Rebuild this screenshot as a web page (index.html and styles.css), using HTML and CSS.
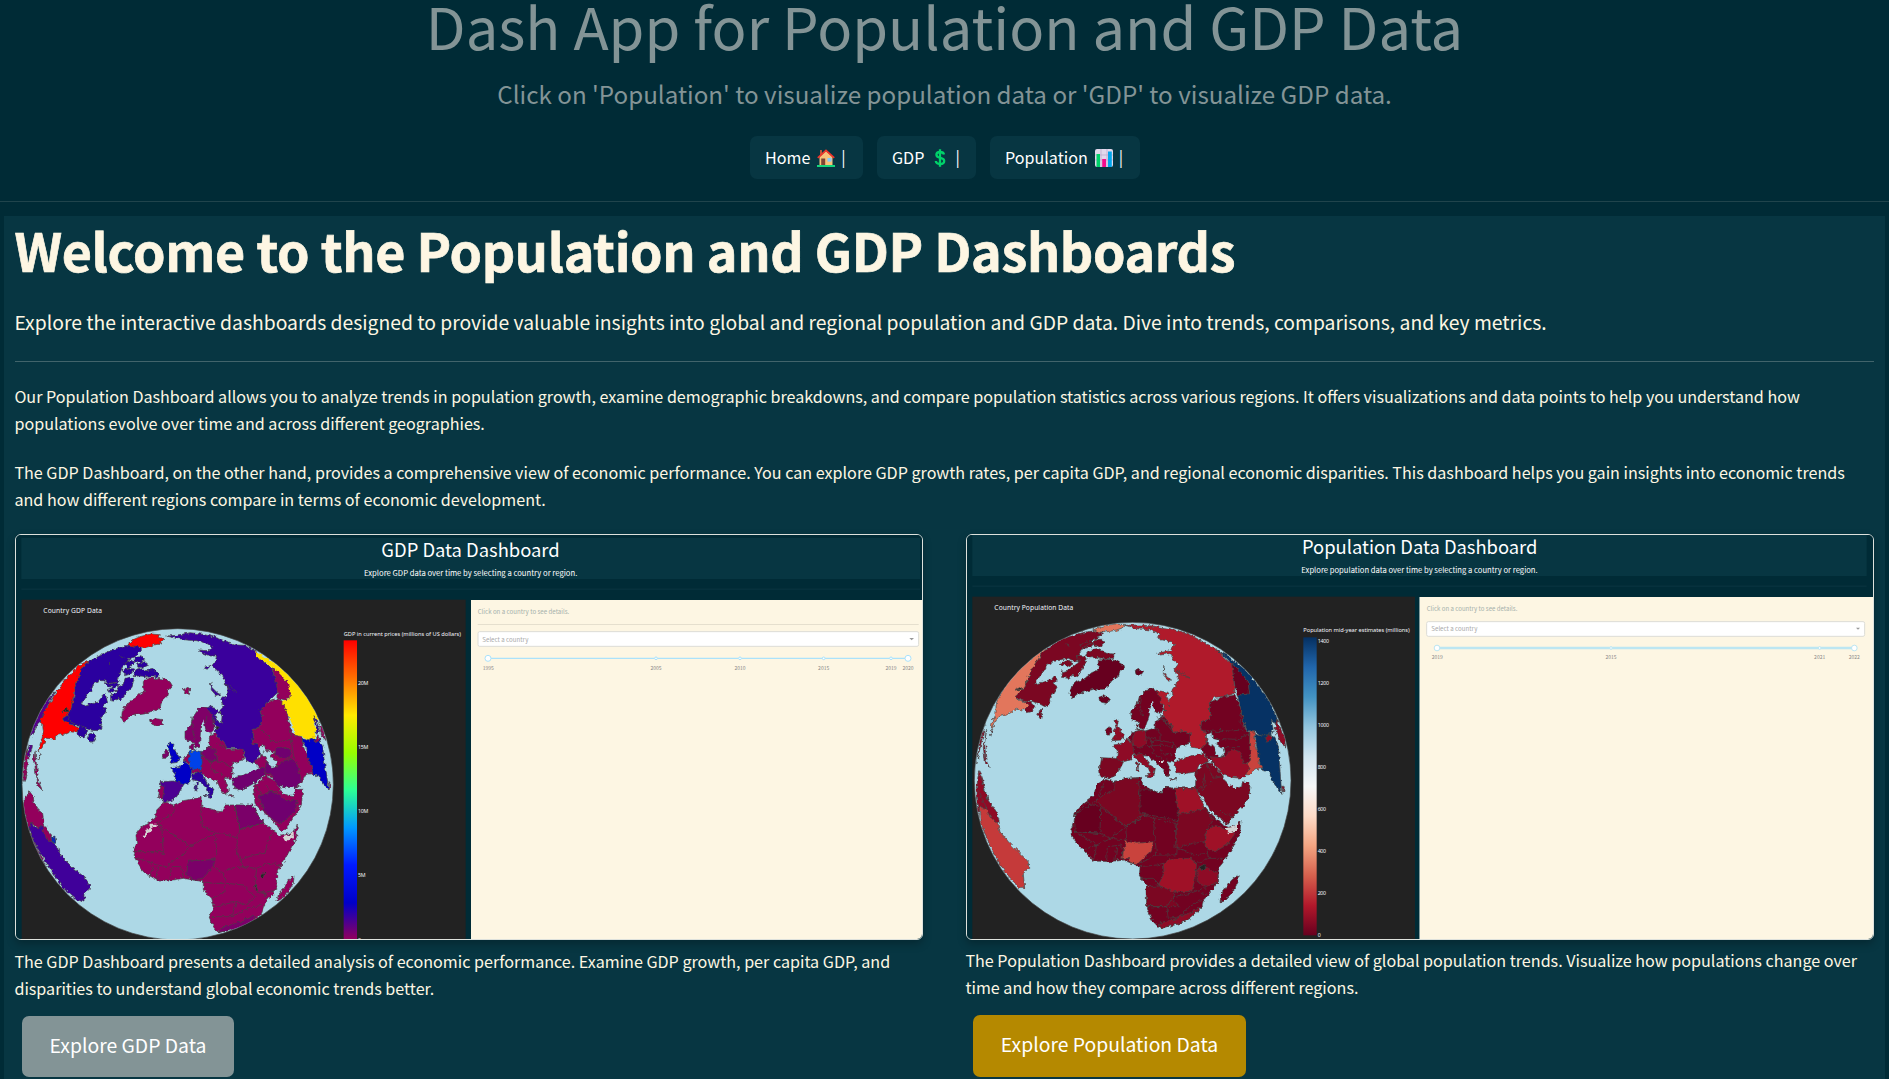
FILE: index.html
```html
<!DOCTYPE html>
<html lang="en">
<head>
<meta charset="utf-8">
<title>Dash App for Population and GDP Data</title>
<link rel="stylesheet" href="styles.css">
</head>
<body>
<header class="site-header">
  <h1 class="site-title"><span>Dash App for Population and GDP Data</span></h1>
  <p class="site-subtitle"><span>Click on 'Population' to visualize population data or 'GDP' to visualize GDP data.</span></p>
  <nav class="nav">
    <a class="nav-link nav-home"><span>Home</span>
      <svg class="emoji" viewBox="0 0 18 18"><path d="M3 1h2v5H3z" fill="#b5583c"/><path d="M2.5 8 9 2l6.500 6v8.500h-13z" fill="#f8c27a"/><path d="M.8 8.800 9 1.400l8.200 7.400" fill="none" stroke="#f0352c" stroke-width="1.800"/><path d="M4.200 9.500h4v7h-4z" fill="#7d4533"/><path d="M10.500 9h4v3.600h-4z" fill="#83cbff"/><path d="M0 16h18v2H0z" fill="#14d67c"/></svg>
      <span class="bar">|</span></a>
    <a class="nav-link nav-gdp"><span>GDP</span>
      <svg class="emoji" viewBox="0 0 18 18"><path d="M13 5.500C12.600 3.600 11 3 9 3 6.800 3 5.400 4 5.400 5.800c0 4.400 7.800 2 7.800 6.200 0 2-1.700 3-4.100 3-2.500 0-4.100-1-4.300-3M9 .3v17.400" fill="none" stroke="#00d26a" stroke-width="2.300"/></svg>
      <span class="bar">|</span></a>
    <a class="nav-link nav-pop"><span>Population</span>
      <svg class="emoji" viewBox="0 0 18 18"><rect width="18" height="18" rx="2" fill="#e1d8ec"/><path d="M0 6h18M0 11h18M6 0v18M12 0v18" stroke="#b9a8cc" stroke-width=".7"/><path d="M1.500 5H5v13H1.500z" fill="#00d26a"/><path d="M7.200 10h3.800v8H7.200z" fill="#f70a8d"/><path d="M13 2.500h3.800V18H13z" fill="#00a6ed"/></svg>
      <span class="bar">|</span></a>
  </nav>
</header>
<main class="panel">
  <h2 class="welcome"><span>Welcome to the Population and GDP Dashboards</span></h2>
  <p class="lead"><span>Explore the interactive dashboards designed to provide valuable insights into global and regional population and GDP data. Dive into trends, comparisons, and key metrics.</span></p>
  <hr class="rule">
  <p class="copy"><span>Our Population Dashboard allows you to analyze trends in population growth, examine demographic breakdowns, and compare population statistics across various regions. It offers visualizations and data points to help you understand how</span><br>populations evolve over time and across different geographies.</p>
  <p class="copy"><span>The GDP Dashboard, on the other hand, provides a comprehensive view of economic performance. You can explore GDP growth rates, per capita GDP, and regional economic disparities. This dashboard helps you gain insights into economic trends</span><br>and how different regions compare in terms of economic development.</p>
  <div class="cards">
    <section class="card card-gdp">
      <svg class="shot" viewBox="18 15 2718 1212" preserveAspectRatio="none">
        <defs>
          <linearGradient id="rainbow" x1="0" y1="1" x2="0" y2="0">
            <stop offset="0" stop-color="#96005a"/><stop offset=".125" stop-color="#0000c8"/><stop offset=".25" stop-color="#0019ff"/><stop offset=".375" stop-color="#0098ff"/><stop offset=".5" stop-color="#2cff96"/><stop offset=".625" stop-color="#97ff00"/><stop offset=".75" stop-color="#ffea00"/><stop offset=".875" stop-color="#ff6f00"/><stop offset="1" stop-color="#f00"/>
          </linearGradient>
          <filter id="coast" x="0" y="0" width="1" height="1" color-interpolation-filters="sRGB"><feTurbulence type="fractalNoise" baseFrequency=".09" numOctaves="2" seed="4"/><feDisplacementMap in="SourceGraphic" scale="14" xChannelSelector="R" yChannelSelector="G"/></filter>
          <clipPath id="globeA"><circle cx="503" cy="763" r="466"/></clipPath>
        </defs>
        <rect x="18" y="15" width="2718" height="1212" fill="#002b36"/>
        <rect x="34" y="24" width="2696" height="123" fill="#073642"/>
        <rect x="34" y="175" width="2696" height="5" fill="#06313d"/>
        <text x="1114" y="81" font-size="56" textLength="535" lengthAdjust="spacingAndGlyphs" fill="#fff">GDP Data Dashboard</text>
        <text x="1062" y="137" font-size="23" textLength="640" lengthAdjust="spacingAndGlyphs" fill="#fff">Explore GDP data over time by selecting a country or region.</text>
        <rect x="35" y="209" width="1332" height="1018" fill="#222"/>
        <text class="ui" x="100" y="248" font-size="20" textLength="176" fill="#f2f5fa">Country GDP Data</text>
        <circle cx="503" cy="763" r="467" fill="#add8e6" stroke="#444" stroke-width="2"/>
        <g clip-path="url(#globeA)"><g filter="url(#coast)" stroke="#444" stroke-width="2" stroke-linejoin="round" fill="#93005c">
          <path fill="#fe0000" d="M352 345 372 328 390 320 420 312 448 314 445 322 460 325 452 335 455 342 430 345 410 352 385 352Z"/>
          <path fill="#2b009f" d="M238 394 260 382 300 362 350 346 385 350 392 356 385 372 375 380 358 385 352 397 338 410 332 425 330 435 322 445 330 455 318 458 295 460 285 452 270 452 250 462 245 478 228 500 215 527 235 522 250 517 262 518 285 490 290 505 293 515 282 520 280 530 290 535 285 550 272 565 275 580 272 595 262 602 240 600 220 592 208 585 195 585 180 580 165 575 158 565 172 555 185 530 192 500 195 470 205 440 215 415Z"/>
          <path fill="#2b009f" d="M205 585 225 592 230 605 222 625 210 622 200 608ZM240 612 250 608 257 628 248 640 240 630 232 622ZM345 400 362 390 375 395 362 410 350 415ZM338 420 358 413 372 418 360 432 345 436ZM372 384 392 380 404 386 396 396 378 394ZM380 402 405 395 416 405 402 412 384 412ZM375 422 395 416 408 422 430 418 448 430 446 442 425 438 405 440 385 438 370 440ZM345 445 362 440 372 450 366 472 352 485 342 500 330 512 326 502 315 514 302 512 302 495 318 490 328 470 340 462ZM285 458 300 462 312 458 328 465 312 472 296 470ZM292 478 308 474 320 480 300 488Z"/>
          <path fill="#fe0000" d="M238 394 210 402 165 450 130 500 105 545 88 572 98 580 100 605 96 625 88 650 84 665 92 660 101 640 108 624 130 628 145 615 165 612 180 605 200 608 207 595 195 588 178 580 160 570 158 565 172 555 182 540 188 515 192 480 205 440 220 410Z"/>
          <path fill="#55008c" d="M135 485 105 515 80 560 60 612 62 620 78 595 90 572 105 545 118 515ZM58 640 67 650 60 676 48 690Z"/>
          <path d="M50 655 54 690 46 745 40 760 42 700ZM75 662 70 690 76 715 78 738 84 735 79 700ZM90 668 86 690 90 680ZM80 738 90 765 98 782 84 768ZM58 783 70 800 72 820 85 840 98 850 102 880 115 905 125 915 122 925 130 937 110 930 95 900 80 890 70 882 60 905 80 955 110 1010 80 970 50 880 38 820 48 800Z"/>
          <path fill="#40009a" d="M66 876 75 892 95 890 102 910 110 928 130 938 142 948 146 965 160 985 190 1015 222 1040 240 1065 237 1080 222 1090 222 1115 200 1110 160 1075 110 1000 80 950 58 900Z"/>
          <path fill="#0828b4" d="M123 922 134 918 138 936 128 940Z"/>
          <path d="M400 455 410 443 440 445 465 448 480 455 487 467 475 480 470 500 455 515 450 535 430 543 408 548 380 552 360 560 342 577 335 565 337 545 348 525 365 512 380 500 390 490 403 485 400 470ZM422 570 435 566 455 568 457 582 437 587 425 582ZM518 480 530 472 543 480 536 488 535 497 526 490Z"/>
          <path fill="#3a009c" d="M470 318 500 316 540 308 575 312 600 318 625 325 650 335 680 345 705 346 738 362 740 380 770 400 785 415 790 430 800 460 805 485 780 510 770 518 758 535 750 542 758 560 750 590 728 600 732 615 725 640 745 645 752 665 745 680 738 698 722 696 705 690 700 660 680 655 650 655 645 640 625 625 615 605 622 590 610 580 605 565 592 555 586 536 600 531 620 536 632 548 614 553 620 572 634 580 636 560 630 542 640 530 634 510 650 495 650 470 640 440 620 420 605 408 615 395 620 378 600 378 575 368 565 360 600 362 608 352 590 340 560 332 530 330 495 324ZM602 455 608 475 622 488 632 494 618 496 604 480ZM580 413 603 405 592 418ZM640 460 660 468 682 487 658 479Z"/>
          <path d="M785 412 812 430 835 460 843 485 842 505 825 510 800 503 805 485 795 445Z"/>
          <path fill="#ffe000" stroke="none" d="M735 366 755 376 800 403 845 440 875 475 905 520 925 560 928 580 916 564 912 568 918 600 912 625 895 632 875 618 855 617 850 590 832 550 812 513 842 507 842 485 830 452 800 422 770 398 740 382Z"/>
          <path d="M770 518 800 507 815 512 832 550 840 590 852 615 875 620 880 650 898 690 905 710 915 730 890 733 875 760 855 775 820 768 790 745 765 735 745 710 735 697 752 680 752 665 745 645 725 640 732 615 728 600 750 590 758 560 750 542Z"/>
          <path fill="#70006f" d="M775 685 800 712 822 692 845 688 860 700 870 735 875 755 855 775 820 770 800 765 785 735 765 722 768 700ZM795 655 820 650 842 660 838 685 815 682 795 672Z"/>
          <path fill="#add8e6" d="M748 655 760 645 765 660 793 668 780 680 798 690 803 708 785 712 770 695 765 680 750 672Z"/>
          <path fill="#0000c6" d="M875 625 895 632 910 625 928 628 938 650 944 700 957 780 945 770 925 735 910 738 905 710 895 690 890 655 880 640Z"/>
          <path d="M926 578 940 600 948 632 934 612ZM912 632 922 614 930 630 920 637ZM955 755 963 765 960 780Z"/><path fill="#2b009f" d="M909 560 917 568 930 605 918 612 920 590Z"/>
          <path fill="#7f0067" d="M525 605 540 590 550 560 570 530 590 532 605 555 612 575 612 598 600 612 588 602 582 580 572 585 572 600 568 650 558 655 550 635 535 635 525 625ZM540 645 552 640 550 660 542 658Z"/>
          <path fill="#add8e6" stroke="none" d="M580 568 574 590 577 608 572 638 578 655 596 648 596 628 604 612 586 602 582 580Z"/>
          <path d="M575 665 598 650 598 615 614 610 628 628 645 640 652 658 700 658 700 690 668 700 666 735 664 745 642 745 655 780 650 795 635 785 622 755 600 745 575 730 545 730 545 700 525 700 520 690 530 675 540 668Z"/>
          <path fill="#0000c6" d="M480 635 492 640 490 655 500 670 510 685 505 697 480 700 487 680 478 665 475 650ZM482 713 510 710 520 697 540 705 545 722 540 758 520 762 497 757 495 730Z"/>
          <path fill="#7b0069" d="M458 672 468 660 475 668 470 685 457 685ZM578 660 600 652 618 658 622 690 602 694 576 680Z"/>
          <path fill="#0042e8" d="M537 668 555 660 575 665 577 698 570 718 548 718 537 705Z"/>
          <path fill="#4c0092" d="M450 755 490 753 522 762 515 775 500 800 485 812 465 815 450 805 458 785Z"/><path d="M450 768 462 768 458 808 445 805Z"/>
          <path fill="#2b009f" d="M545 735 575 725 580 740 595 765 612 778 608 790 603 802 584 797 600 794 590 775 570 755 548 748ZM556 758 562 758 560 786 555 784Z"/>
          <path fill="#70006f" d="M668 745 700 737 730 718 760 715 768 732 740 752 728 762 700 778 680 780 668 765Z"/>
          <path fill="#add8e6" stroke="none" d="M668 707 684 700 690 710 702 698 712 700 738 710 732 720 700 735 670 740Z"/>
          <path d="M730 768 765 738 790 750 810 775 818 792 850 800 856 778 878 778 875 820 860 850 835 885 815 908 800 885 770 855 745 832 735 820ZM655 797 672 797 662 801Z"/>
          <path fill="#70006f" d="M745 800 780 785 805 792 830 812 862 810 857 842 815 880 790 870 765 845Z"/>
          <path fill="#add8e6" stroke="none" d="M806 768 830 778 855 768 854 792 838 798 824 788Z"/>
          <path d="M465 815 490 825 520 812 573 802 576 830 610 842 635 845 645 825 675 825 728 828 735 840 750 865 775 890 795 905 812 918 835 912 850 905 862 885 860 920 840 960 815 1005 800 1030 800 1080 765 1120 755 1150 725 1180 690 1195 625 1208 610 1190 597 1160 612 1130 605 1105 580 1080 580 1055 550 1050 520 1045 490 1050 440 1050 400 1025 375 985 370 965 380 940 378 915 395 890 435 865 440 840ZM852 1040 850 1060 825 1100 800 1115 805 1095 825 1070 835 1050Z"/>
          <path fill="#7b0069" d="M675 825 728 825 742 855 762 878 690 898ZM535 990 575 992 615 987 610 1010 578 1045 550 1050 530 1035ZM625 1208 635 1192 680 1180 725 1158 735 1160 722 1182 690 1195Z"/>
          <path fill="#d3d3d3" stroke="none" d="M418 884h22v7h-12l-3 12-12 2-2 16-14-1 14-24 10-2ZM818 920 840 914 850 900 852 925 825 933Z"/>
          <path fill="#222" d="M750 1040 758 1028 766 1030 760 1045ZM733 1060 736 1080 743 1082ZM762 1080 766 1100ZM155 545 172 535 178 545ZM182 510 188 525ZM616 588 628 592 622 598ZM783 630 792 634ZM332 380 343 383ZM296 398 304 403Z"/>
          <path fill="none" d="M495 825 492 848 440 878 456 898 460 975M440 878 537 948 615 910 610 905 577 890 573 850 577 830M537 948 520 975 490 990 470 1010 440 1005 400 990 375 985M615 910 620 960 615 987M615 910 640 908 682 925 690 898M675 830 690 898 762 878M682 925 680 965 690 990 730 975 765 970 775 930 790 905M690 990 700 1010 660 1015 640 1030 610 1010M700 1010 740 1015 770 1000 815 1005M740 1015 735 1060 745 1090 800 1080M640 1030 650 1060 640 1090 605 1105M650 1060 700 1065 735 1100 710 1125 680 1115 612 1130M680 1115 665 1160 597 1160M665 1160 700 1140 755 1125M420 1040 430 1010M440 1050 445 1010M480 1045 485 1010 515 1010 520 1045M580 1055 610 1060 640 1060M372 965H460M752 600 800 640 840 625M840 590 845 640 852 688M752 680 765 660M545 560 548 600 555 630M592 555 585 580M622 640 650 655M600 690 640 695 665 715M600 690 605 720 640 735M735 762 755 790 745 815M762 765 785 785 805 785M195 585 170 560"/>
        </g></g>
        <text class="ui" x="1001" y="317" font-size="17" textLength="352" fill="#f2f5fa">GDP in current prices (millions of US dollars)</text>
        <rect x="1001" y="331" width="40" height="900" fill="url(#rainbow)"/>
        <g class="ui" font-size="16" fill="#f2f5fa"><text x="1044" y="464" textLength="31">20M</text><text x="1044" y="657" textLength="31">15M</text><text x="1044" y="849" textLength="31">10M</text><text x="1044" y="1042" textLength="23">5M</text><text x="1044" y="1236">0</text></g>
        <rect x="1383" y="210" width="1353" height="1017" fill="#fdf6e3"/>
        <text x="1403" y="251" font-size="20" textLength="275" lengthAdjust="spacingAndGlyphs" fill="#a5b1ac">Click on a country to see details.</text>
        <rect x="1403" y="282" width="1323" height="3" fill="#e5dfce"/>
        <rect x="1404" y="305" width="1322" height="44" rx="5" fill="#fff" stroke="#dcdcd6" stroke-width="3"/>
        <text x="1417" y="335" font-size="20" textLength="138" lengthAdjust="spacingAndGlyphs" fill="#aaa">Select a country</text>
        <path d="M2698 324h14l-7 7z" fill="#999"/>
        <path d="M1434 385H2694" stroke="#abe2fb" stroke-width="4"/>
        <g fill="#fff" stroke="#abe2fb" stroke-width="3"><circle cx="1434" cy="385" r="9"/><circle cx="1938" cy="385" r="4"/><circle cx="2190" cy="385" r="4"/><circle cx="2441" cy="385" r="4"/><circle cx="2643" cy="385" r="4"/><circle cx="2694" cy="385" r="9"/></g>
        <g class="tick"><text x="1435" y="419">1995</text><text x="1938" y="419">2005</text><text x="2190" y="419">2010</text><text x="2441" y="419">2015</text><text x="2643" y="419">2019</text><text x="2694" y="419">2020</text></g>
      </svg>
      <p class="caption"><span>The GDP Dashboard presents a detailed analysis of economic performance. Examine GDP growth, per capita GDP, and</span><br>disparities to understand global economic trends better.</p>
      <a class="btn btn-gdp"><span>Explore GDP Data</span></a>
    </section>
    <section class="card card-pop">
      <svg class="shot" viewBox="21 15 2718 1212" preserveAspectRatio="none">
        <defs>
          <linearGradient id="rdbu" x1="0" y1="1" x2="0" y2="0">
            <stop offset="0" stop-color="#67001f"/><stop offset=".1" stop-color="#b2182b"/><stop offset=".2" stop-color="#d6604d"/><stop offset=".3" stop-color="#f4a582"/><stop offset=".4" stop-color="#fddbc7"/><stop offset=".5" stop-color="#f7f7f7"/><stop offset=".6" stop-color="#d1e5f0"/><stop offset=".7" stop-color="#92c5de"/><stop offset=".8" stop-color="#4393c3"/><stop offset=".9" stop-color="#2166ac"/><stop offset="1" stop-color="#053061"/>
          </linearGradient>
          <clipPath id="globeB"><circle cx="518" cy="752" r="474"/></clipPath>
        </defs>
        <rect x="21" y="15" width="2718" height="1212" fill="#002b36"/>
        <rect x="37" y="15" width="2683" height="123" fill="#073642"/>
        <rect x="37" y="166" width="2683" height="5" fill="#06313d"/>
        <text x="1026" y="73" font-size="56" textLength="706" lengthAdjust="spacingAndGlyphs" fill="#fff">Population Data Dashboard</text>
        <text x="1024" y="128" font-size="23" textLength="709" lengthAdjust="spacingAndGlyphs" fill="#fff">Explore population data over time by selecting a country or region.</text>
        <rect x="37" y="200" width="1328" height="1027" fill="#222"/>
        <text class="ui" x="103" y="239" font-size="20" textLength="237" fill="#f2f5fa">Country Population Data</text>
        <circle cx="518" cy="752" r="475" fill="#add8e6" stroke="#444" stroke-width="2"/>
        <g clip-path="url(#globeB)"><g filter="url(#coast)" stroke="#444" stroke-width="2" stroke-linejoin="round" fill="#720221">
          <path fill="#e2765c" d="M398 300 430 288 465 282 495 284 492 292 470 300 430 308 410 303Z"/>
          <path fill="#7b0722" d="M262 355 300 330 350 312 400 302 428 308 420 320 400 328 390 340 372 350 362 365 352 380 362 392 345 395 325 385 300 390 280 395 262 405 250 425 235 445 222 462 255 455 275 448 285 435 292 450 282 462 292 470 280 490 270 505 268 525 255 530 235 520 215 512 198 515 180 510 165 500 175 488 195 470 205 440 225 400 245 370ZM200 515 216 518 222 532 215 545 200 548 190 535ZM238 545 248 540 242 568 230 552ZM362 345 380 332 402 340 392 352 372 355ZM405 328 428 328 432 342 415 350 400 344ZM385 362 410 356 440 370 462 372 460 385 435 386 410 382 390 384 375 375ZM352 375 372 378 380 392 368 415 350 440 338 436 325 445 305 442 308 425 325 420 342 408 355 398ZM300 400 318 392 340 400 322 410Z"/>
          <path fill="#e2765c" d="M262 355 245 370 222 410 205 440 195 470 178 488 165 500 180 512 198 516 205 528 190 540 172 538 155 545 135 556 115 560 104 580 92 600 98 570 108 550 108 525 112 510 135 470 165 430 200 395 235 365Z"/>
          <path fill="#8e0b26" d="M75 585 70 610 60 655 50 700 62 620ZM80 598 74 640 78 690 88 712 76 700 70 650ZM98 598 92 620 94 605ZM56 722 66 740 75 780 85 812 98 828 112 850 118 875 108 880 92 865 80 840 62 830 55 850 48 790Z"/>
          <path fill="#c53a3a" d="M58 832 80 835 90 862 112 878 120 905 145 935 175 965 205 995 206 1015 190 1030 194 1072 175 1072 130 1020 85 940 60 870Z"/>
          <path fill="#67001f" d="M415 390 440 387 470 393 494 408 480 425 475 440 455 452 445 470 430 478 400 478 375 485 355 493 338 506 330 490 335 468 350 455 375 445 395 428 415 420ZM416 502 430 497 448 508 440 520 420 516ZM525 422 538 418 548 427 538 440 528 433Z"/>
          <path fill="#b01a2b" d="M495 286 540 285 575 288 620 294 660 303 700 320 735 338 775 362 800 390 815 400 820 430 825 490 790 500 762 502 752 515 748 540 755 555 745 570 725 575 722 595 738 610 738 640 752 655 720 655 692 652 690 610 668 602 640 608 632 590 612 570 608 545 612 530 600 512 585 480 605 484 628 488 618 500 626 512 640 500 636 480 652 460 655 440 642 420 655 402 640 390 632 370 605 375 590 370 630 362 645 345 635 335 608 330 592 322 600 312 570 300 530 296ZM612 405 610 425 622 442 636 450 622 450 610 430ZM648 420 665 428 692 445 668 438Z"/>
          <path fill="#063264" d="M770 362 800 375 850 415 900 470 935 530 952 570 950 590 942 575 934 570 940 600 930 615 905 618 885 605 862 605 850 570 832 495 868 492 865 455 840 425 815 400 790 375ZM886 612 905 618 930 612 945 622 955 650 960 720 965 790 945 765 925 725 905 720 895 680 890 650Z"/>
          <path fill="#67001f" d="M815 400 840 425 865 455 868 492 832 495 825 470Z"/>
          <path fill="#8e0b26" d="M914 622 934 614 938 628 920 637ZM950 570 972 620 978 655 960 630 945 600ZM965 768 973 770 970 790Z"/>
          <path d="M825 495 840 530 858 600 870 610 870 650 880 690 868 720 845 742 800 735 760 700 722 660 740 640 738 610 722 595 725 575 745 570 755 555 748 540 752 515 790 500Z"/>
          <path fill="#c9433d" d="M870 606 884 606 886 650 896 670 898 700 906 712 885 720 862 738 858 705 872 690 868 640Z"/>
          <path fill="#970d27" d="M750 680 780 683 800 675 815 658 840 665 850 700 870 705 862 730 845 745 815 742 790 735 765 705Z"/>
          <path fill="#add8e6" d="M738 615 755 607 758 625 782 632 770 642 790 655 793 675 780 682 768 672 760 650 742 635Z"/>
          <path d="M512 545 530 530 538 500 560 478 582 475 600 500 608 535 600 550 585 545 575 520 568 530 570 550 560 580 552 598 540 595 535 575 515 570ZM525 585 535 580 533 600Z"/>
          <path fill="#add8e6" stroke="none" d="M576 512 568 535 570 555 562 580 566 600 585 593 586 570 600 555 582 545Z"/>
          <path d="M560 604 585 593 586 572 608 558 632 585 640 608 668 602 690 610 690 640 655 650 648 680 640 695 618 690 632 720 622 740 608 715 585 695 560 678 520 672 515 655 520 640 500 625 518 608 540 600Z"/>
          <path fill="#8e0b26" d="M462 568 475 570 472 590 482 600 492 615 485 630 455 632 468 615 460 605 468 595ZM458 645 480 642 500 628 520 640 520 665 512 690 490 695 470 690 472 665ZM525 605 545 600 558 605 558 640 540 655 520 645 518 625ZM518 675 545 670 555 685 570 705 586 715 582 735 575 742 555 738 572 730 565 715 545 700 532 690ZM530 698 536 700 534 725 529 722Z"/>
          <path d="M436 600 448 590 456 600 450 615 437 615ZM558 602 585 594 600 605 600 630 575 635 560 622Z"/>
          <path fill="#7b0722" d="M425 683 465 685 490 697 478 720 462 740 440 745 418 738 416 720 422 700Z"/>
          <path fill="#970d27" d="M642 695 680 682 720 670 742 680 745 695 715 708 710 725 680 730 652 728Z"/>
          <path fill="#add8e6" stroke="none" d="M648 658 668 650 675 660 690 652 718 660 715 670 680 680 645 690Z"/>
          <path fill="#7b0722" d="M708 722 738 698 755 700 780 725 795 752 825 775 845 770 847 755 870 760 868 800 848 830 820 860 800 885 785 870 755 845 720 790 706 785ZM630 746 648 746 636 750Z"/>
          <path fill="#add8e6" stroke="none" d="M790 740 812 750 845 745 842 768 826 775 808 765Z"/>
          <path d="M435 748 462 755 500 745 545 742 548 765 575 780 605 790 612 772 645 775 708 772 715 800 735 835 760 860 790 885 805 892 830 885 843 870 840 905 820 950 795 990 775 1015 775 1055 745 1095 730 1110 725 1135 690 1165 660 1180 600 1196 580 1175 558 1135 575 1105 565 1070 538 1040 540 1010 515 1000 490 990 450 995 400 993 370 960 335 920 332 900 342 875 345 850 370 820 402 798 408 765ZM834 1035 835 1055 815 1090 790 1115 780 1115 785 1090 800 1070 815 1050Z"/>
          <path fill="#7b0722" d="M462 755 500 745 535 745 540 810 555 855 497 890 408 812 430 795 462 780ZM652 850 735 835 760 870 740 900 735 935 700 940 645 955ZM558 1070 600 1068 645 1085 640 1110 660 1130 560 1130Z"/>
          <path fill="#67001f" d="M540 780 570 780 605 790 612 772 645 775 655 850 655 872 555 852 540 850ZM345 855 380 820 422 830 420 910 345 905Z"/>
          <path fill="#9f1127" d="M645 775 708 775 735 835 658 853ZM740 900 765 885 795 898 825 910 800 945 765 965 735 950ZM610 1000 640 985 690 985 710 1000 705 1050 695 1085 640 1085 595 1065 612 1030Z"/>
          <path fill="#8e0b26" d="M710 1020 740 1012 772 1030 775 1055 740 1070 712 1058ZM600 1196 598 1180 650 1165 705 1140 728 1130 690 1165 660 1180Z"/>
          <path fill="#c9433d" d="M497 933 530 940 580 935 575 960 535 1000 512 1000 505 985 485 985Z"/>
          <path fill="#d3d3d3" stroke="none" d="M795 895 818 890 830 878 832 905 808 910ZM600 690h8v6h-8z"/>
          <path fill="#222" d="M720 1010 732 1003 737 1008 725 1022ZM165 480 185 470 188 478ZM195 450 204 456ZM606 535 618 540ZM622 525 630 532ZM320 342 328 350ZM778 598 790 602Z"/>
          <path fill="none" d="M435 755 408 812 345 855M422 830 497 890 500 930M345 905 420 910M420 910 450 925 497 890 555 855 580 865 585 930M580 865 645 880 652 955 700 975 740 970M585 930 590 975 650 975 652 955M590 975 540 1000M540 1010 590 1005 610 1000M400 993 410 945 370 960M440 990 442 950 485 945 490 985M465 990 470 950M500 930 450 925 410 945M342 905 370 920 410 945M540 1045 580 1045 600 1065M740 950 745 985 710 1000M745 985 790 985M560 1130 620 1130 640 1100 690 1090 745 1070M620 1130 625 1165 660 1160 690 1125 730 1110M720 1090 740 1095M735 730 730 770 706 785M738 698 760 745 790 740M755 755 725 780M825 860 790 850 780 840M560 620 600 630 640 640 655 660M560 650 600 645 640 650M575 635 580 670 610 690M600 645 605 670 640 675M545 500 540 530 548 560M590 560 640 590M600 555 640 608M722 600 780 605 850 600M760 625 830 628 870 610M795 650 840 650M845 540 840 580 858 600M62 740 85 812M55 780 80 838"/>
        </g></g>
        <text class="ui" x="1030" y="307" font-size="17" textLength="319" fill="#f2f5fa">Population mid-year estimates (millions)</text>
        <rect x="1030" y="322" width="40" height="894" fill="url(#rdbu)"/>
        <g class="ui" font-size="16" fill="#f2f5fa"><text x="1073" y="338" textLength="34">1400</text><text x="1073" y="464" textLength="34">1200</text><text x="1073" y="591" textLength="34">1000</text><text x="1073" y="717" textLength="25">800</text><text x="1073" y="843" textLength="25">600</text><text x="1073" y="969" textLength="25">400</text><text x="1073" y="1095" textLength="25">200</text><text x="1073" y="1222">0</text></g>
        <rect x="1377" y="201" width="1362" height="1026" fill="#fdf6e3"/>
        <rect x="1377" y="201" width="3" height="1026" fill="#859b9b"/>
        <text x="1400" y="242" font-size="20" textLength="272" lengthAdjust="spacingAndGlyphs" fill="#a5b1ac">Click on a country to see details.</text>
        <rect x="1400" y="275" width="1314" height="44" rx="5" fill="#fff" stroke="#dcdcd6" stroke-width="3"/>
        <text x="1414" y="303" font-size="20" textLength="138" lengthAdjust="spacingAndGlyphs" fill="#aaa">Select a country</text>
        <path d="M2688 293h12l-6 6z" fill="#999"/>
        <path d="M1431 354H2683" stroke="#bce6f2" stroke-width="7"/>
        <g fill="#fff" stroke="#bce6f2" stroke-width="3"><circle cx="1431" cy="354" r="8.500"/><circle cx="1953" cy="354" r="4"/><circle cx="2579" cy="354" r="4"/><circle cx="2683" cy="354" r="8.500"/></g>
        <g class="tick"><text x="1432" y="386">2019</text><text x="1953" y="386">2015</text><text x="2579" y="386">2021</text><text x="2683" y="386">2022</text></g>
      </svg>
      <p class="caption"><span>The Population Dashboard provides a detailed view of global population trends. Visualize how populations change over</span><br>time and how they compare across different regions.</p>
      <a class="btn btn-pop"><span>Explore Population Data</span></a>
    </section>
  </div>
</main>
</body>
</html>
```
FILE: styles.css
```css
* { box-sizing: border-box; }
body {
  margin: 0;
  height: 1079px;
  overflow: hidden;
  background: #002b36;
  color: #fdf6e3;
  font-family: "Noto Sans CJK SC", "Noto Sans", sans-serif;
  font-size: 16.120px;
  line-height: 27px;
  white-space: nowrap;
}
h1, h2, p { margin: 0; font-weight: 400; }
.site-header {
  display: flow-root;
  height: 202px;
  border-bottom: 1px solid #20444c;
  color: #839496;
  text-align: center;
}
.site-title { font-size: 57.900px; line-height: 72px; height: 62px; margin-top: -11px; }
.site-subtitle { font-size: 24.200px; line-height: 36px; padding-top: 25px; height: 85px; }
.nav { display: flex; justify-content: center; gap: 14px; }
.nav-link {
  display: flex;
  align-items: center;
  height: 43px;
  padding-left: 15.500px;
  border-radius: 7px;
  background: #073642;
  color: #fff;
}
.nav-home { width: 113px; }
.nav-gdp { width: 99px; }
.nav-pop { width: 150px; }
.emoji { width: 18px; height: 18px; margin: 0 6px 0 7px; }
.panel {
  width: 1881px;
  height: 870px;
  margin: 14px 0 0 4px;
  padding: 0 11px;
  background: #073642;
}
.welcome {
  height: 89px;
  padding-top: 0;
  font-size: 52px;
  font-weight: 700;
  line-height: 67px;
  letter-spacing: -.34px;
  -webkit-text-stroke: .7px #fdf6e3;
}
.lead { font-size: 19.320px; line-height: 34px; height: 56px; }
.rule { height: 1px; margin: 0 0 21px; border: 0; background: #41646b; }
.copy { margin-bottom: 22px; }
.welcome, .lead, .copy { margin-left: -.6px; }
.cards { display: flex; justify-content: space-between; margin-top: -1px; }
.card { display: flex; flex-direction: column; align-items: flex-start; width: 908px; }
.shot {
  width: 908px;
  height: 406px;
  border: 1px solid #dde1dc;
  border-radius: 6px;
  box-shadow: 0 4px 8px rgba(0, 0, 0, .25);
}
.shot text { font-family: "Noto Sans CJK SC", sans-serif; }
.shot .ui, .shot .ui text { font-family: "Noto Sans", sans-serif; }
.tick { font-size: 15px; fill: #888; text-anchor: middle; }
.caption { margin: 8px 0 0 -.6px; }
.card-pop .caption { margin-top: 7px; }
.btn {
  display: flex;
  align-items: center;
  justify-content: center;
  height: 61px;
  margin: 14px 0 0 7px;
  padding-bottom: 3px;
  border-radius: 7px;
  color: #fff;
  font-size: 19.350px;
}
.btn-gdp { width: 212px; background: #839496; }
.btn-pop { width: 273px; height: 62px; background: #b58900; }
```
